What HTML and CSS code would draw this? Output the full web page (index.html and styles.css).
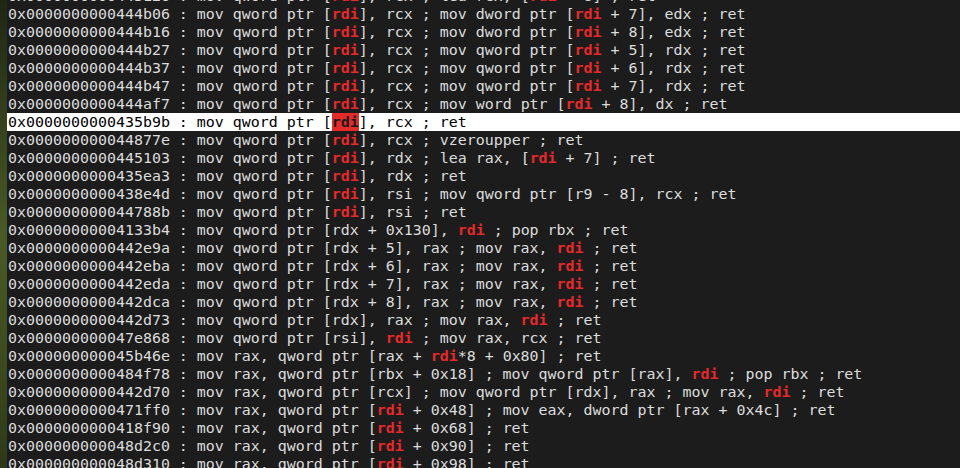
FILE: index.html
```html
<!DOCTYPE html>
<html>
<head>
<meta charset="utf-8">
<link rel="stylesheet" href="styles.css">
</head>
<body>
<div class="screen">
  <div class="desk"></div>
  <div class="term">
    <div class="lines">
      <div class="ln">0x0000000000443126 : mov qword ptr [<b class="r">rdi</b>], rcx ; lea rcx, [<b class="r">rdi</b> + 8] ; ret</div>
      <div class="ln">0x0000000000444b06 : mov qword ptr [<b class="r">rdi</b>], rcx ; mov dword ptr [<b class="r">rdi</b> + 7], edx ; ret</div>
      <div class="ln">0x0000000000444b16 : mov qword ptr [<b class="r">rdi</b>], rcx ; mov dword ptr [<b class="r">rdi</b> + 8], edx ; ret</div>
      <div class="ln">0x0000000000444b27 : mov qword ptr [<b class="r">rdi</b>], rcx ; mov qword ptr [<b class="r">rdi</b> + 5], rdx ; ret</div>
      <div class="ln">0x0000000000444b37 : mov qword ptr [<b class="r">rdi</b>], rcx ; mov qword ptr [<b class="r">rdi</b> + 6], rdx ; ret</div>
      <div class="ln">0x0000000000444b47 : mov qword ptr [<b class="r">rdi</b>], rcx ; mov qword ptr [<b class="r">rdi</b> + 7], rdx ; ret</div>
      <div class="ln">0x0000000000444af7 : mov qword ptr [<b class="r">rdi</b>], rcx ; mov word ptr [<b class="r">rdi</b> + 8], dx ; ret</div>
      <div class="ln sel">0x0000000000435b9b : mov qword ptr [<b class="hit">rdi</b>], rcx ; ret</div>
      <div class="ln">0x000000000044877e : mov qword ptr [<b class="r">rdi</b>], rcx ; vzeroupper ; ret</div>
      <div class="ln">0x0000000000445103 : mov qword ptr [<b class="r">rdi</b>], rdx ; lea rax, [<b class="r">rdi</b> + 7] ; ret</div>
      <div class="ln">0x0000000000435ea3 : mov qword ptr [<b class="r">rdi</b>], rdx ; ret</div>
      <div class="ln">0x0000000000438e4d : mov qword ptr [<b class="r">rdi</b>], rsi ; mov qword ptr [r9 - 8], rcx ; ret</div>
      <div class="ln">0x000000000044788b : mov qword ptr [<b class="r">rdi</b>], rsi ; ret</div>
      <div class="ln">0x00000000004133b4 : mov qword ptr [rdx + 0x130], <b class="r">rdi</b> ; pop rbx ; ret</div>
      <div class="ln">0x0000000000442e9a : mov qword ptr [rdx + 5], rax ; mov rax, <b class="r">rdi</b> ; ret</div>
      <div class="ln">0x0000000000442eba : mov qword ptr [rdx + 6], rax ; mov rax, <b class="r">rdi</b> ; ret</div>
      <div class="ln">0x0000000000442eda : mov qword ptr [rdx + 7], rax ; mov rax, <b class="r">rdi</b> ; ret</div>
      <div class="ln">0x0000000000442dca : mov qword ptr [rdx + 8], rax ; mov rax, <b class="r">rdi</b> ; ret</div>
      <div class="ln">0x0000000000442d73 : mov qword ptr [rdx], rax ; mov rax, <b class="r">rdi</b> ; ret</div>
      <div class="ln">0x000000000047e868 : mov qword ptr [rsi], <b class="r">rdi</b> ; mov rax, rcx ; ret</div>
      <div class="ln">0x000000000045b46e : mov rax, qword ptr [rax + <b class="r">rdi</b>*8 + 0x80] ; ret</div>
      <div class="ln">0x0000000000484f78 : mov rax, qword ptr [rbx + 0x18] ; mov qword ptr [rax], <b class="r">rdi</b> ; pop rbx ; ret</div>
      <div class="ln">0x0000000000442d70 : mov rax, qword ptr [rcx] ; mov qword ptr [rdx], rax ; mov rax, <b class="r">rdi</b> ; ret</div>
      <div class="ln">0x0000000000471ff0 : mov rax, qword ptr [<b class="r">rdi</b> + 0x48] ; mov eax, dword ptr [rax + 0x4c] ; ret</div>
      <div class="ln">0x0000000000418f90 : mov rax, qword ptr [<b class="r">rdi</b> + 0x68] ; ret</div>
      <div class="ln">0x000000000048d2c0 : mov rax, qword ptr [<b class="r">rdi</b> + 0x90] ; ret</div>
      <div class="ln">0x000000000048d310 : mov rax, qword ptr [<b class="r">rdi</b> + 0x98] ; ret</div>
    </div>
  </div>
</div>
</body>
</html>
```

FILE: styles.css
```css
html, body {
  margin: 0;
  padding: 0;
  background: #1c1c1c;
  overflow: hidden;
}

.screen {
  display: flex;
  width: 960px;
  height: 468px;
  overflow: hidden;
}

.desk {
  flex: 0 0 7px;
  background: linear-gradient(180deg, #1f2614 0%, #34401c 25%, #4a5a26 50%, #3e4c1e 75%, #2e3818 100%);
}

.term {
  flex: 1;
  background: #1c1c1c;
  overflow: hidden;
}

.lines {
  margin-top: -13px;
  font-family: "DejaVu Sans Mono", monospace;
  font-size: 14.95px;
  color: #dcdcdc;
}

.ln {
  height: 18px;
  line-height: 18px;
  padding-left: 1px;
  white-space: pre;
}

.r {
  color: #e8292b;
  font-weight: bold;
}

.sel {
  background: #ffffff;
  color: #000000;
}

.hit {
  background: #e52a2a;
  color: #1a1a1a;
  font-weight: bold;
  display: inline-block;
  height: 18px;
}
```
